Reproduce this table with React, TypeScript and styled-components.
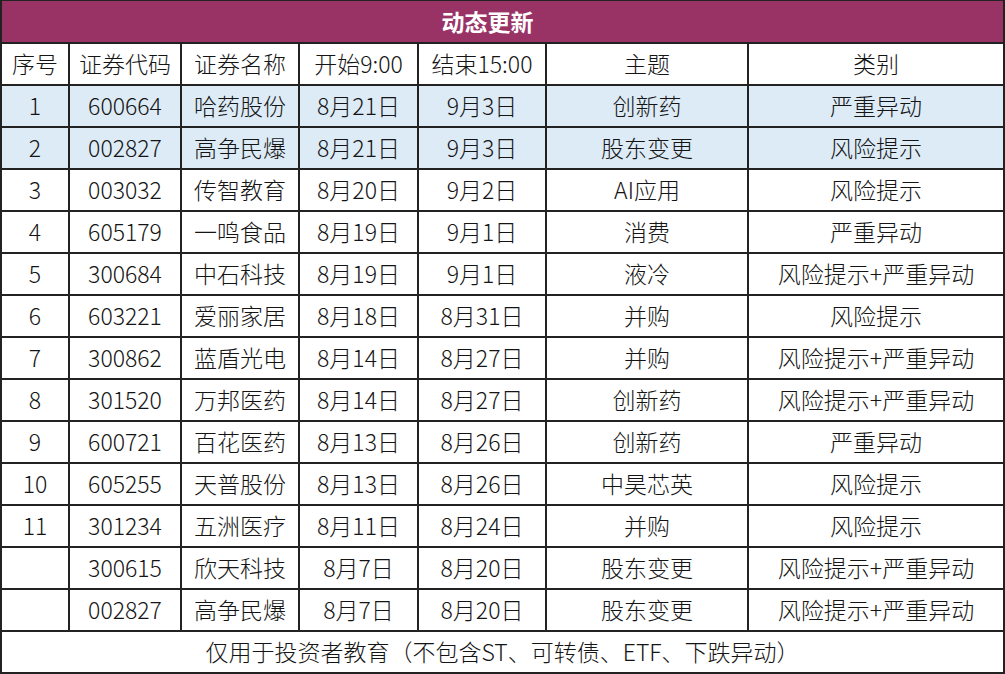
import React from "react";
import styled, { createGlobalStyle } from "styled-components";

const GlobalStyle = createGlobalStyle`
  html, body { margin: 0; padding: 0; background: #ffffff; }
  body { font-family: "Noto Sans CJK SC", sans-serif; }
`;

const LINE = "#222222";
const COLS = "68px 112px 118px 119px 128px 202px 256px";

const Frame = styled.div`
  width: 1005px;
  height: 674px;
  box-sizing: border-box;
  border-left: 2px solid ${LINE};
  border-top: 1px solid ${LINE};
  display: flex;
  flex-direction: column;
  font-family: "Noto Sans CJK SC", sans-serif;
  font-size: 23px;
  font-weight: 300;
  color: #141414;
`;

const TitleBar = styled.div`
  height: 43px;
  box-sizing: border-box;
  background: #993366;
  border-right: 2px solid ${LINE};
  border-bottom: 2px solid ${LINE};
  display: flex;
  align-items: center;
  justify-content: center;
  padding-right: 30px;
  padding-bottom: 2px;
  color: #ffffff;
  font-weight: 700;
  font-size: 23px;
`;

const Row = styled.div<{ $highlight?: boolean }>`
  display: grid;
  grid-template-columns: ${COLS};
  height: 42px;
  background: ${(p) => (p.$highlight ? "#DDEBF7" : "#ffffff")};
`;

const Cell = styled.div`
  box-sizing: border-box;
  border-right: 2px solid ${LINE};
  border-bottom: 2px solid ${LINE};
  display: flex;
  align-items: center;
  justify-content: center;
  white-space: nowrap;
  overflow: hidden;
  padding-bottom: 2px;
`;

const Footer = styled.div`
  height: 42px;
  box-sizing: border-box;
  border-right: 2px solid ${LINE};
  border-bottom: 2px solid ${LINE};
  display: flex;
  align-items: center;
  justify-content: center;
  white-space: nowrap;
  padding-bottom: 2px;
`;

const headers = ["序号", "证券代码", "证券名称", "开始9:00", "结束15:00", "主题", "类别"];

const rows: string[][] = [
  ["1", "600664", "哈药股份", "8月21日", "9月3日", "创新药", "严重异动"],
  ["2", "002827", "高争民爆", "8月21日", "9月3日", "股东变更", "风险提示"],
  ["3", "003032", "传智教育", "8月20日", "9月2日", "AI应用", "风险提示"],
  ["4", "605179", "一鸣食品", "8月19日", "9月1日", "消费", "严重异动"],
  ["5", "300684", "中石科技", "8月19日", "9月1日", "液冷", "风险提示+严重异动"],
  ["6", "603221", "爱丽家居", "8月18日", "8月31日", "并购", "风险提示"],
  ["7", "300862", "蓝盾光电", "8月14日", "8月27日", "并购", "风险提示+严重异动"],
  ["8", "301520", "万邦医药", "8月14日", "8月27日", "创新药", "风险提示+严重异动"],
  ["9", "600721", "百花医药", "8月13日", "8月26日", "创新药", "严重异动"],
  ["10", "605255", "天普股份", "8月13日", "8月26日", "中昊芯英", "风险提示"],
  ["11", "301234", "五洲医疗", "8月11日", "8月24日", "并购", "风险提示"],
  ["", "300615", "欣天科技", "8月7日", "8月20日", "股东变更", "风险提示+严重异动"],
  ["", "002827", "高争民爆", "8月7日", "8月20日", "股东变更", "风险提示+严重异动"],
];

export default function App() {
  return (
    <>
      <GlobalStyle />
      <Frame>
        <TitleBar>动态更新</TitleBar>
        <Row>
          {headers.map((h) => (
            <Cell key={h}>{h}</Cell>
          ))}
        </Row>
        {rows.map((r, i) => (
          <Row key={i} $highlight={i < 2}>
            {r.map((c, j) => (
              <Cell key={j}>{c}</Cell>
            ))}
          </Row>
        ))}
        <Footer>仅用于投资者教育（不包含ST、可转债、ETF、下跌异动）</Footer>
      </Frame>
    </>
  );
}
